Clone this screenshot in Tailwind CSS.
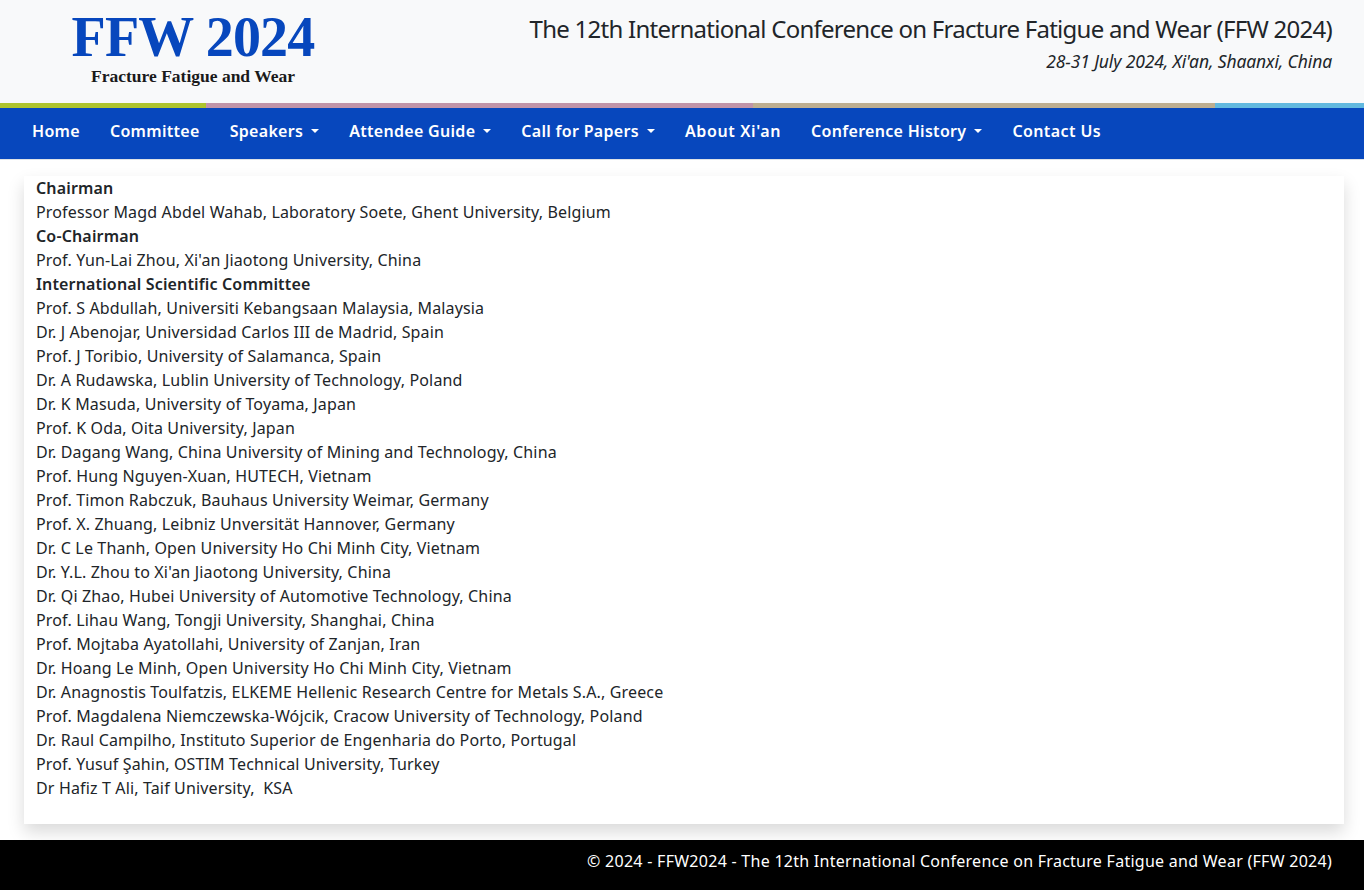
<!DOCTYPE html>
<html lang="en">
<head>
  <meta charset="UTF-8" />
  <title>FFW 2024 - Committee</title>
  <script src="https://cdn.jsdelivr.net/npm/@tailwindcss/browser@4"></script>
</head>
<body class="bg-white font-['Noto_Sans',sans-serif] text-[#212529] text-[16px] leading-[24px] tracking-[0.15px]">
  <header class="h-[103px] bg-[#f8f9fa] flex justify-between pr-[32px]">
    <div class="w-[386px] flex flex-col items-center font-['Liberation_Serif',serif] font-bold">
      <div class="text-[#0747bd] text-[56px] leading-[50px] mt-[12px] tracking-[-0.8px]">FFW 2024</div>
      <div class="text-[#1a1a1a] text-[17.5px] leading-[18px] mt-[5px] tracking-normal">Fracture Fatigue and Wear</div>
    </div>
    <div class="text-right">
      <div class="text-[24px] leading-[29px] mt-[14px] tracking-[-0.74px]">The 12th International Conference on Fracture Fatigue and Wear (FFW 2024)</div>
      <div class="italic text-[17.5px] leading-[24px] mt-[6px] tracking-[-0.12px]">28-31 July 2024, Xi'an, Shaanxi, China</div>
    </div>
  </header>
  <div class="flex h-[5px]">
    <div class="w-[206px] bg-[#aec42d]"></div>
    <div class="w-[547px] bg-[#c094a8]"></div>
    <div class="w-[462px] bg-[#bdae90]"></div>
    <div class="flex-1 bg-[#62b9df]"></div>
  </div>
  <nav class="h-[51px] bg-[#0747bd] flex items-center pl-[32px] pb-[6px] gap-[30px] text-white font-semibold tracking-[0.3px]">
    <a>Home</a>
    <a>Committee</a>
    <a class="flex items-center">Speakers<span class="ml-[8px] border-x-[4px] border-t-[4px] border-x-transparent border-t-white"></span></a>
    <a class="flex items-center">Attendee Guide<span class="ml-[8px] border-x-[4px] border-t-[4px] border-x-transparent border-t-white"></span></a>
    <a class="flex items-center">Call for Papers<span class="ml-[8px] border-x-[4px] border-t-[4px] border-x-transparent border-t-white"></span></a>
    <a class="tracking-[0.63px]">About Xi'an</a>
    <a class="flex items-center">Conference History<span class="ml-[8px] border-x-[4px] border-t-[4px] border-x-transparent border-t-white"></span></a>
    <a class="tracking-[0.4px]">Contact Us</a>
  </nav>
  <div class="h-px bg-[#dee2e6]"></div>
  <main class="ml-[24px] mr-[20px] mt-[16px] pl-[12px] pb-[24px] bg-white shadow-[0_8px_16px_rgba(0,0,0,0.15)] h-[648px]">
    <p class="font-semibold">Chairman</p>
    <p>Professor Magd Abdel Wahab, Laboratory Soete, Ghent University, Belgium</p>
    <p class="font-semibold">Co-Chairman</p>
    <p>Prof. Yun-Lai Zhou, Xi'an Jiaotong University, China</p>
    <p class="font-semibold">International Scientific Committee</p>
    <p>Prof. S Abdullah, Universiti Kebangsaan Malaysia, Malaysia</p>
    <p>Dr. J Abenojar, Universidad Carlos III de Madrid, Spain</p>
    <p>Prof. J Toribio, University of Salamanca, Spain</p>
    <p>Dr. A Rudawska, Lublin University of Technology, Poland</p>
    <p>Dr. K Masuda, University of Toyama, Japan</p>
    <p>Prof. K Oda, Oita University, Japan</p>
    <p>Dr. Dagang Wang, China University of Mining and Technology, China</p>
    <p>Prof. Hung Nguyen-Xuan, HUTECH, Vietnam</p>
    <p>Prof. Timon Rabczuk, Bauhaus University Weimar, Germany</p>
    <p>Prof. X. Zhuang, Leibniz Unversität Hannover, Germany</p>
    <p>Dr. C Le Thanh, Open University Ho Chi Minh City, Vietnam</p>
    <p>Dr. Y.L. Zhou to Xi'an Jiaotong University, China</p>
    <p>Dr. Qi Zhao, Hubei University of Automotive Technology, China</p>
    <p>Prof. Lihau Wang, Tongji University, Shanghai, China</p>
    <p>Prof. Mojtaba Ayatollahi, University of Zanjan, Iran</p>
    <p>Dr. Hoang Le Minh, Open University Ho Chi Minh City, Vietnam</p>
    <p>Dr. Anagnostis Toulfatzis, ELKEME Hellenic Research Centre for Metals S.A., Greece</p>
    <p>Prof. Magdalena Niemczewska-Wójcik, Cracow University of Technology, Poland</p>
    <p>Dr. Raul Campilho, Instituto Superior de Engenharia do Porto, Portugal</p>
    <p>Prof. Yusuf Şahin, OSTIM Technical University, Turkey</p>
    <p class="whitespace-pre">Dr Hafiz T Ali, Taif University,  KSA</p>
  </main>
  <footer class="mt-[16px] h-[50px] bg-black text-white flex items-center justify-end pr-[32px] pb-[8px] tracking-[0.27px]">© 2024 - FFW2024 - The 12th International Conference on Fracture Fatigue and Wear (FFW 2024)</footer>
</body>
</html>
